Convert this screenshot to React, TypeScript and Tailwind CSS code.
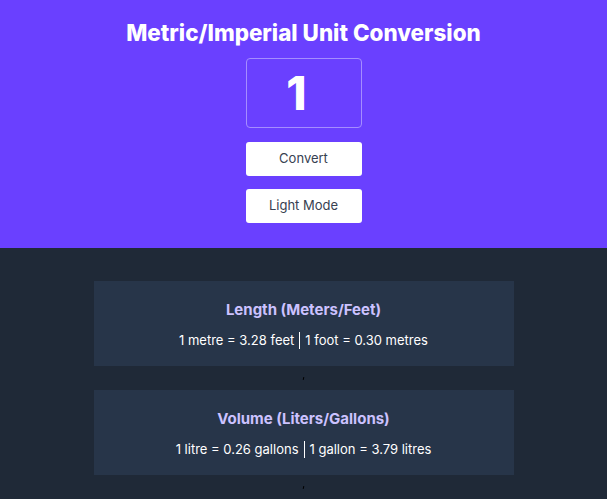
const conversions = [
  {
    title: 'Length (Meters/Feet)',
    left: '1 metre = 3.28 feet',
    right: '1 foot = 0.30 metres',
  },
  {
    title: 'Volume (Liters/Gallons)',
    left: '1 litre = 0.26 gallons',
    right: '1 gallon = 3.79 litres',
  },
];

export default function App() {
  return (
    <div className="min-h-[499px] bg-[#1f2937] font-['Inter',sans-serif]">
      <header className="flex h-[248px] flex-col items-center bg-[#6a40ff] pt-[19px]">
        <h1 className="text-[22.4px] font-extrabold leading-[28px] text-white">
          Metric/Imperial Unit Conversion
        </h1>
        <div className="mt-[11px] flex h-[70px] w-[116px] items-center justify-center rounded-[4px] border border-[#a58dff] pr-[14px] text-[46px] font-extrabold text-white">
          1
        </div>
        <button className="mt-[14px] h-[34px] w-[116px] rounded-[3px] bg-white text-[13px] text-[#374151]">
          Convert
        </button>
        <button className="mt-[13px] h-[34px] w-[116px] rounded-[3px] bg-white text-[13px] text-[#374151]">
          Light Mode
        </button>
      </header>

      <main className="flex flex-col items-center pt-[33px]">
        {conversions.map((c) => (
          <div key={c.title} className="flex flex-col items-center">
            <section className="flex h-[85px] w-[420px] flex-col items-center bg-[#273549] pt-[19px]">
              <h2 className="text-[15px] font-bold leading-[20px] text-[#ccc2ff]">{c.title}</h2>
              <p className="mt-[10px] flex items-center text-[13px] leading-[20px] text-white">
                {c.left}
                <span className="mx-[5px] inline-block h-[17px] w-px bg-white" />
                {c.right}
              </p>
            </section>
            <div className="flex h-[24px] items-center justify-center">
              <span className="block h-[3px] w-px rotate-12 bg-black" />
            </div>
          </div>
        ))}
      </main>
    </div>
  );
}
